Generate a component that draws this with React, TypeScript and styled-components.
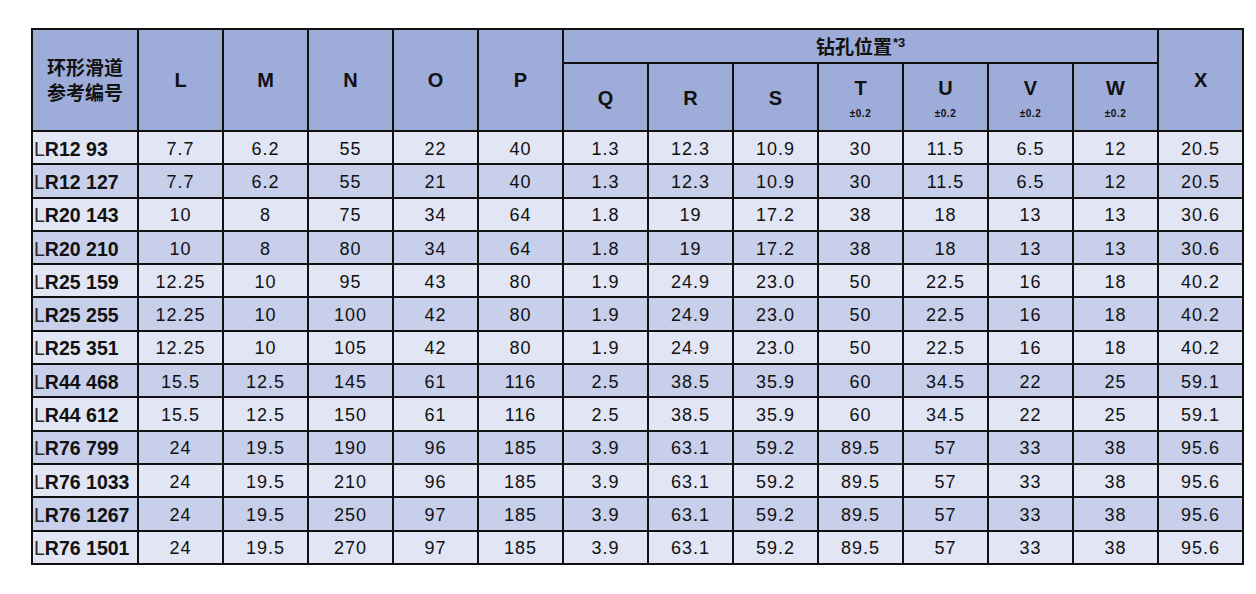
import React from 'react'
import styled, { createGlobalStyle } from 'styled-components'

const GlobalStyle = createGlobalStyle`
  html, body {
    margin: 0;
    padding: 0;
    background: #ffffff;
  }
  body {
    font-family: "Liberation Sans", Arial, "Noto Sans CJK SC", sans-serif;
    color: #111;
  }
`

const Page = styled.div`
  padding: 28px 0 0 31px;
`

const Table = styled.table`
  border-collapse: collapse;
  table-layout: fixed;
  width: 1211px;
  border: 2px solid #111;
`

const HeadCell = styled.th<{ $tall?: boolean }>`
  background: #9eacd9;
  border: 2px solid #111;
  font-weight: 700;
  font-size: 20px;
  text-align: center;
  vertical-align: middle;
  padding: 0;
  height: ${p => (p.$tall ? 66 : 32)}px;
  line-height: 1.2;
`

const GroupCell = styled(HeadCell)`
  font-family: "Noto Sans CJK SC", "Liberation Sans", sans-serif;
  font-size: 19px;
  line-height: 24px;
`

const TitleCell = styled(HeadCell)`
  font-family: "Noto Sans CJK SC", "Liberation Sans", sans-serif;
  font-size: 19px;
  line-height: 1.3;
`

const Sup = styled.sup`
  font-family: "Liberation Sans", sans-serif;
  font-size: 13px;
  vertical-align: top;
  position: relative;
  top: -3px;
  margin-left: 1px;
`

const Letter = styled.div`
  line-height: 22px;
  margin-top: 2px;
`

const Tol = styled.div`
  font-size: 10px;
  font-weight: 700;
  margin-top: 10px;
  line-height: 10px;
  letter-spacing: 0.5px;
`

const Row = styled.tr<{ $dark: boolean }>`
  background: ${p => (p.$dark ? '#c7cfeb' : '#e1e5f4')};
`

const DataCell = styled.td`
  border: 2px solid #111;
  font-size: 18px;
  letter-spacing: 1px;
  text-align: center;
  vertical-align: middle;
  padding: 2px 0 0;
  height: 29.3px;
  line-height: 20px;
`

const NameCell = styled(DataCell)`
  text-align: left;
  font-weight: 700;
  font-size: 19.5px;
  letter-spacing: 0;
  padding-left: 1px;
  white-space: nowrap;
`

const ThinL = styled.span`
  font-weight: 400;
  color: #2a2a2a;
`

const rows: [string, string[]][] = [
  ['R12 93', ['7.7', '6.2', '55', '22', '40', '1.3', '12.3', '10.9', '30', '11.5', '6.5', '12', '20.5']],
  ['R12 127', ['7.7', '6.2', '55', '21', '40', '1.3', '12.3', '10.9', '30', '11.5', '6.5', '12', '20.5']],
  ['R20 143', ['10', '8', '75', '34', '64', '1.8', '19', '17.2', '38', '18', '13', '13', '30.6']],
  ['R20 210', ['10', '8', '80', '34', '64', '1.8', '19', '17.2', '38', '18', '13', '13', '30.6']],
  ['R25 159', ['12.25', '10', '95', '43', '80', '1.9', '24.9', '23.0', '50', '22.5', '16', '18', '40.2']],
  ['R25 255', ['12.25', '10', '100', '42', '80', '1.9', '24.9', '23.0', '50', '22.5', '16', '18', '40.2']],
  ['R25 351', ['12.25', '10', '105', '42', '80', '1.9', '24.9', '23.0', '50', '22.5', '16', '18', '40.2']],
  ['R44 468', ['15.5', '12.5', '145', '61', '116', '2.5', '38.5', '35.9', '60', '34.5', '22', '25', '59.1']],
  ['R44 612', ['15.5', '12.5', '150', '61', '116', '2.5', '38.5', '35.9', '60', '34.5', '22', '25', '59.1']],
  ['R76 799', ['24', '19.5', '190', '96', '185', '3.9', '63.1', '59.2', '89.5', '57', '33', '38', '95.6']],
  ['R76 1033', ['24', '19.5', '210', '96', '185', '3.9', '63.1', '59.2', '89.5', '57', '33', '38', '95.6']],
  ['R76 1267', ['24', '19.5', '250', '97', '185', '3.9', '63.1', '59.2', '89.5', '57', '33', '38', '95.6']],
  ['R76 1501', ['24', '19.5', '270', '97', '185', '3.9', '63.1', '59.2', '89.5', '57', '33', '38', '95.6']],
]

const leftCols = ['L', 'M', 'N', 'O', 'P']
const drillCols = ['Q', 'R', 'S', 'T', 'U', 'V', 'W']
const tolerance = new Set(['T', 'U', 'V', 'W'])

export default function App() {
  return (
    <Page>
      <GlobalStyle />
      <Table>
        <colgroup>
          <col style={{ width: 106 }} />
          {Array.from({ length: 13 }).map((_, i) => (
            <col key={i} style={{ width: 85 }} />
          ))}
        </colgroup>
        <thead>
          <tr>
            <TitleCell rowSpan={2}>
              环形滑道
              <br />
              参考编号
            </TitleCell>
            {leftCols.map(c => (
              <HeadCell key={c} rowSpan={2}>{c}</HeadCell>
            ))}
            <GroupCell colSpan={7}>
              钻孔位置<Sup>*3</Sup>
            </GroupCell>
            <HeadCell rowSpan={2}>X</HeadCell>
          </tr>
          <tr>
            {drillCols.map(c => (
              <HeadCell key={c} $tall>
                <Letter>{c}</Letter>
                {tolerance.has(c) && <Tol>±0.2</Tol>}
              </HeadCell>
            ))}
          </tr>
        </thead>
        <tbody>
          {rows.map(([name, vals], i) => (
            <Row key={name} $dark={i % 2 === 1}>
              <NameCell>
                <ThinL>L</ThinL>
                {name}
              </NameCell>
              {vals.map((v, j) => (
                <DataCell key={j}>{v}</DataCell>
              ))}
            </Row>
          ))}
        </tbody>
      </Table>
    </Page>
  )
}
